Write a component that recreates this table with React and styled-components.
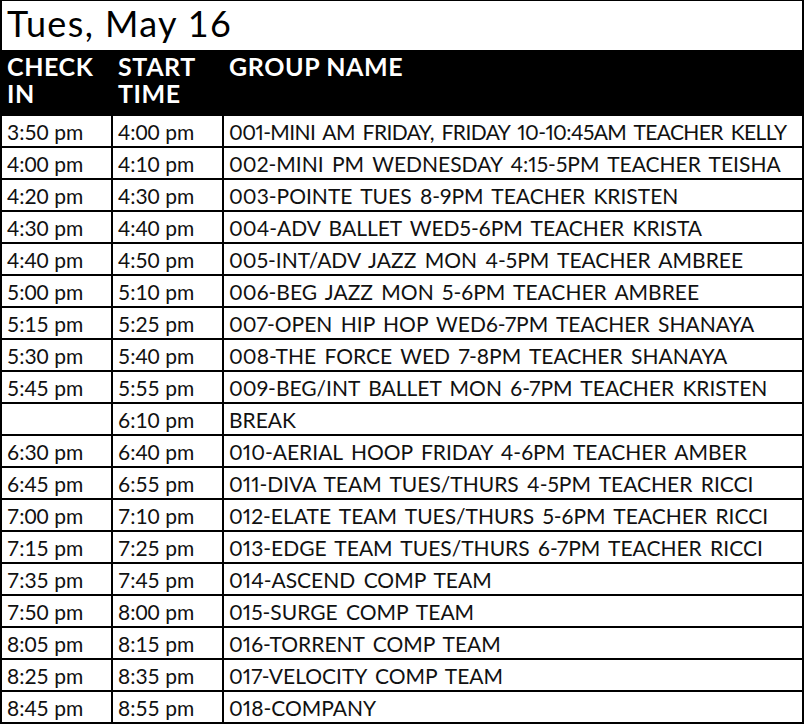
import React from 'react'
import styled, {createGlobalStyle} from 'styled-components'

// check in, start time, group name, (optional) tighter tracking for long names
const rows = [
  ['3:50 pm', '4:00 pm', '001-MINI AM FRIDAY, FRIDAY 10-10:45AM TEACHER KELLY', -0.6],
  ['4:00 pm', '4:10 pm', '002-MINI PM WEDNESDAY 4:15-5PM TEACHER TEISHA'],
  ['4:20 pm', '4:30 pm', '003-POINTE TUES 8-9PM TEACHER KRISTEN'],
  ['4:30 pm', '4:40 pm', '004-ADV BALLET WED5-6PM TEACHER KRISTA'],
  ['4:40 pm', '4:50 pm', '005-INT/ADV JAZZ MON 4-5PM TEACHER AMBREE'],
  ['5:00 pm', '5:10 pm', '006-BEG JAZZ MON 5-6PM TEACHER AMBREE'],
  ['5:15 pm', '5:25 pm', '007-OPEN HIP HOP WED6-7PM TEACHER SHANAYA'],
  ['5:30 pm', '5:40 pm', '008-THE FORCE WED 7-8PM TEACHER SHANAYA'],
  ['5:45 pm', '5:55 pm', '009-BEG/INT BALLET MON 6-7PM TEACHER KRISTEN'],
  ['', '6:10 pm', 'BREAK'],
  ['6:30 pm', '6:40 pm', '010-AERIAL HOOP FRIDAY 4-6PM TEACHER AMBER'],
  ['6:45 pm', '6:55 pm', '011-DIVA TEAM TUES/THURS 4-5PM TEACHER RICCI'],
  ['7:00 pm', '7:10 pm', '012-ELATE TEAM TUES/THURS 5-6PM TEACHER RICCI'],
  ['7:15 pm', '7:25 pm', '013-EDGE TEAM TUES/THURS 6-7PM TEACHER RICCI'],
  ['7:35 pm', '7:45 pm', '014-ASCEND COMP TEAM'],
  ['7:50 pm', '8:00 pm', '015-SURGE COMP TEAM'],
  ['8:05 pm', '8:15 pm', '016-TORRENT COMP TEAM'],
  ['8:25 pm', '8:35 pm', '017-VELOCITY COMP TEAM'],
  ['8:45 pm', '8:55 pm', '018-COMPANY'],
]

const GlobalStyle = createGlobalStyle`
  body {
    margin: 0;
    background: #fff;
    font-family: Lato, "Liberation Sans", sans-serif;
  }
`

// the whole sheet: black background shows through the gaps as lines
const Sheet = styled.div`
  width: 804px;
  box-sizing: border-box;
  display: grid;
  grid-template-columns: 109px 109px 1fr;
  grid-template-rows: 49px 62px repeat(${rows.length}, 30px);
  gap: 2px;
  background: #000;
  border-style: solid;
  border-color: #000;
  border-width: 1px 2px 2px 2px;
`

const Title = styled.div`
  grid-column: 1 / -1;
  background: #fff;
  padding-left: 5px;
  font-size: 36px;
  letter-spacing: 1.4px;
  line-height: 44px;
  color: #000;
`

const HeadCell = styled.div`
  padding: 1px 0 0 5px;
  color: #fff;
  font-size: 25px;
  font-weight: 700;
  letter-spacing: 0.6px;
  line-height: 27px;
`

const Cell = styled.div`
  background: #fff;
  padding-left: 5px;
  font-size: 21px;
  font-variant-numeric: ${({$group})=> $group ? 'proportional-nums' : 'normal'};
  word-spacing: ${({$group})=> $group ? '3px' : '0'};
  letter-spacing: ${({$squeeze})=> $squeeze ? `${$squeeze}px` : '0'};
  line-height: 31px;
  color: #111;
  white-space: nowrap;
  overflow: hidden;
`

const App = () => {
  return (
    <>
      <GlobalStyle/>
      <Sheet>
        <Title>Tues, May 16</Title>
        <HeadCell>CHECK<br/>IN</HeadCell>
        <HeadCell>START<br/>TIME</HeadCell>
        <HeadCell>GROUP NAME</HeadCell>
        {
          rows.map((r, i)=>(
            <React.Fragment key={i}>
              <Cell>{r[0]}</Cell>
              <Cell>{r[1]}</Cell>
              <Cell $group $squeeze={r[3]}>{r[2]}</Cell>
            </React.Fragment>
          ))
        }
      </Sheet>
    </>
  )
}

export default App
